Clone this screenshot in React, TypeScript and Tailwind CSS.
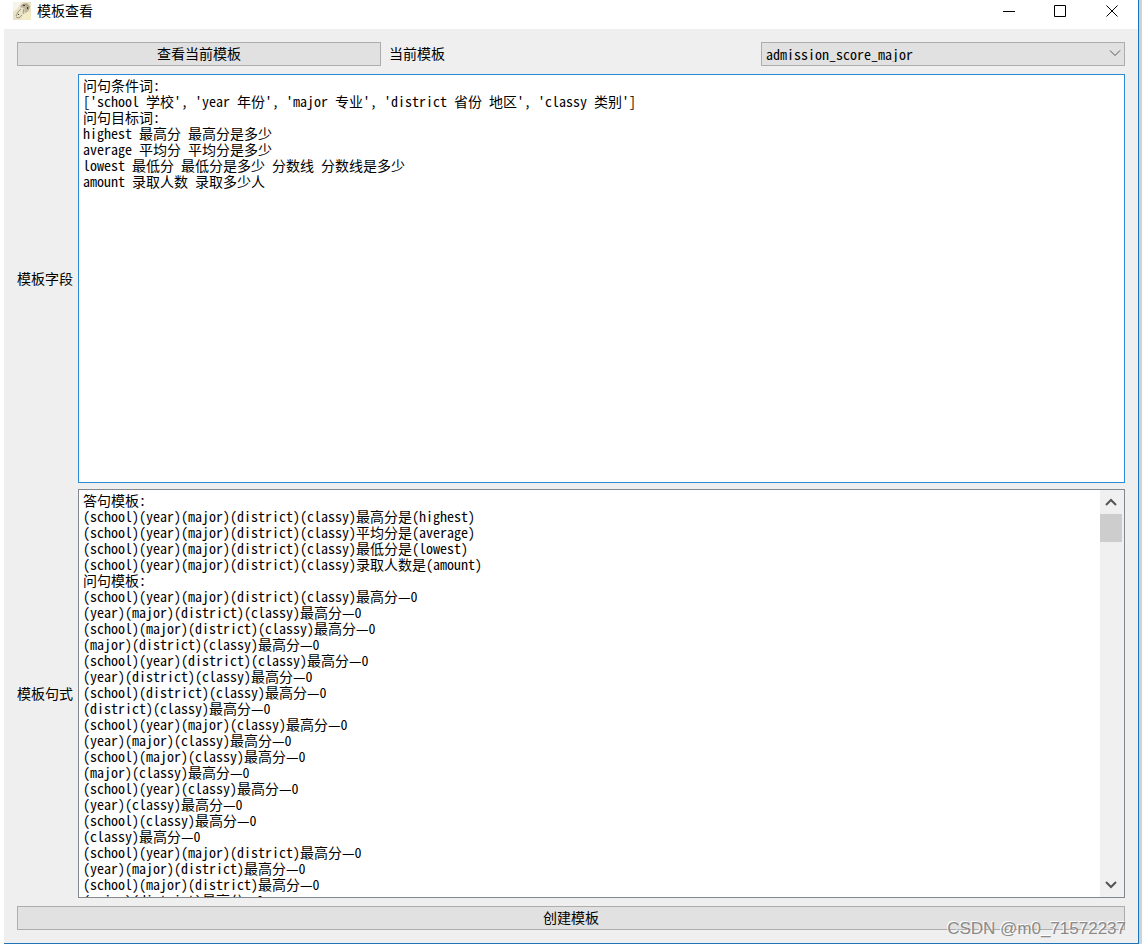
import { useRef, useState } from 'react'

const TEMPLATES = ['admission_score_major', 'admission_score_school', 'admission_plan']

const FIELDS_TEXT = `问句条件词:
['school 学校', 'year 年份', 'major 专业', 'district 省份 地区', 'classy 类别']
问句目标词:
highest 最高分 最高分是多少
average 平均分 平均分是多少
lowest 最低分 最低分是多少 分数线 分数线是多少
amount 录取人数 录取多少人`

const PATTERNS_TEXT = `答句模板:
(school)(year)(major)(district)(classy)最高分是(highest)
(school)(year)(major)(district)(classy)平均分是(average)
(school)(year)(major)(district)(classy)最低分是(lowest)
(school)(year)(major)(district)(classy)录取人数是(amount)
问句模板:
(school)(year)(major)(district)(classy)最高分—0
(year)(major)(district)(classy)最高分—0
(school)(major)(district)(classy)最高分—0
(major)(district)(classy)最高分—0
(school)(year)(district)(classy)最高分—0
(year)(district)(classy)最高分—0
(school)(district)(classy)最高分—0
(district)(classy)最高分—0
(school)(year)(major)(classy)最高分—0
(year)(major)(classy)最高分—0
(school)(major)(classy)最高分—0
(major)(classy)最高分—0
(school)(year)(classy)最高分—0
(year)(classy)最高分—0
(school)(classy)最高分—0
(classy)最高分—0
(school)(year)(major)(district)最高分—0
(year)(major)(district)最高分—0
(school)(major)(district)最高分—0
(major)(district)最高分—0`

function AppIcon() {
  return (
    <svg viewBox="0 0 18 18" className="h-[18px] w-[18px]" aria-hidden="true">
      <rect width="18" height="18" fill="#e9e2c9" />
      <path d="M0 0h9L4 7 0 10z" fill="#f7f4ea" />
      <path d="M12 9l6 2v7H8z" fill="#f3ebc3" />
      <path d="M7 5l3-3 4-1 3 3-1 4-3 3-2-1 1-3-2-1z" fill="#bdb49b" />
      <path d="M8 4l3-2 3 1M14 3l2 2-1 3M8 7l-3 3-2 4M11 7l-1 3 1 2M3 15l3 1 3-3" fill="none" stroke="#a09679" />
      <path d="M10 3h2v1h-2zM14 5h1v2h-1zM5 12h1v1H5z" fill="#3f3a33" />
    </svg>
  )
}

function TitleBar() {
  return (
    <header className="flex h-[29px] shrink-0 items-start bg-white pl-[9px]">
      <div className="flex h-[22px] flex-1 items-center gap-[6px]">
        <AppIcon />
        <h1 className="text-sm leading-4">模板查看</h1>
      </div>
      <div className="flex h-[22px] text-black">
        <button type="button" aria-label="最小化" className="flex w-[51px] items-center justify-center">
          <svg width="12" height="12" viewBox="0 0 12 12" fill="none" stroke="currentColor">
            <path d="M0 6.5h12" />
          </svg>
        </button>
        <button type="button" aria-label="最大化" className="flex w-[51px] items-center justify-center">
          <svg width="12" height="12" viewBox="0 0 12 12" fill="none" stroke="currentColor">
            <path d="M.5.5h11v11H.5z" />
          </svg>
        </button>
        <button type="button" aria-label="关闭" className="flex w-[53px] items-center justify-center">
          <svg width="12" height="12" viewBox="0 0 12 12" fill="none" stroke="currentColor">
            <path d="M.5.5l11 11M11.5.5l-11 11" />
          </svg>
        </button>
      </div>
    </header>
  )
}

export default function App() {
  const [template, setTemplate] = useState(TEMPLATES[0])
  const [fields, setFields] = useState(FIELDS_TEXT)
  const [patterns, setPatterns] = useState(PATTERNS_TEXT)
  const patternsRef = useRef<HTMLTextAreaElement>(null)

  const scrollPatterns = (delta: number) => {
    patternsRef.current?.scrollBy({ top: delta })
  }

  return (
    <div className="relative flex h-screen bg-white pb-[3px] pl-1 font-['Liberation_Sans','Noto_Sans_CJK_SC',sans-serif] text-sm text-black">
      <div className="flex min-w-0 flex-1 flex-col border-r border-b border-[#1f74b8]">
        <TitleBar />
        <main className="flex min-h-0 flex-1 flex-col gap-2 bg-[#efefef] p-[13px]">
          <div className="grid grid-cols-3 gap-2">
            <button type="button" className="h-6 border border-[#adadad] bg-[#e1e1e1] leading-4">
              查看当前模板
            </button>
            <label htmlFor="template" className="self-center leading-4">
              当前模板
            </label>
            <div className="relative">
              <select
                id="template"
                value={template}
                onChange={(e) => setTemplate(e.target.value)}
                className="block h-6 w-full appearance-none border border-[#adadad] bg-[#e1e1e1] px-1 font-['Noto_Sans_Mono_CJK_SC','Noto_Sans_CJK_SC',monospace] text-sm leading-4"
              >
                {TEMPLATES.map((name) => (
                  <option key={name}>{name}</option>
                ))}
              </select>
              <svg
                className="pointer-events-none absolute top-2 right-1 h-[7px] w-3"
                viewBox="0 0 12 7"
                fill="none"
                stroke="#555"
                aria-hidden="true"
              >
                <path d="M1 .5l5 5 5-5" />
              </svg>
            </div>
          </div>

          <div className="grid min-h-0 flex-1 grid-cols-[auto_1fr] grid-rows-2 gap-x-[5px] gap-y-[6px]">
            <label htmlFor="fields" className="self-center leading-4">
              模板字段
            </label>
            <textarea
              id="fields"
              value={fields}
              onChange={(e) => setFields(e.target.value)}
              spellCheck={false}
              className="resize-none border border-[#2b8ad8] bg-white px-1 pt-[2px] font-['Noto_Sans_Mono_CJK_SC','Noto_Sans_CJK_SC',monospace] text-sm leading-4 outline-none"
            />
            <label htmlFor="patterns" className="self-center leading-4">
              模板句式
            </label>
            <div className="flex min-h-0 border border-[#828790] bg-white">
              <textarea
                id="patterns"
                ref={patternsRef}
                value={patterns}
                onChange={(e) => setPatterns(e.target.value)}
                spellCheck={false}
                className="min-w-0 flex-1 resize-none overflow-hidden px-1 pt-[2px] font-['Noto_Sans_Mono_CJK_SC','Noto_Sans_CJK_SC',monospace] text-sm leading-4 outline-none"
              />
              <div className="flex w-6 flex-col bg-[#f0f0f0] pr-[2px]">
                <button
                  type="button"
                  aria-label="向上滚动"
                  onClick={() => scrollPatterns(-48)}
                  className="flex h-6 items-center justify-center"
                >
                  <svg width="12" height="8" viewBox="0 0 12 8" fill="none" stroke="#555" strokeWidth="2">
                    <path d="M1 7l5-5 5 5" />
                  </svg>
                </button>
                <div className="h-7 bg-[#cdcdcd]" />
                <div className="flex-1" />
                <button
                  type="button"
                  aria-label="向下滚动"
                  onClick={() => scrollPatterns(48)}
                  className="flex h-6 items-center justify-center"
                >
                  <svg width="12" height="8" viewBox="0 0 12 8" fill="none" stroke="#555" strokeWidth="2">
                    <path d="M1 1l5 5 5-5" />
                  </svg>
                </button>
              </div>
            </div>
          </div>

          <button type="button" className="h-6 border border-[#adadad] bg-[#e1e1e1] leading-4">
            创建模板
          </button>
        </main>
      </div>
      <div className="w-[3px] bg-[#c9d3dc]" />
      <p className="pointer-events-none absolute right-4 bottom-2 text-[17px] leading-5 text-[#8a8a8a] [text-shadow:-1px_-1px_0_#fff]">
        CSDN @m0_71572237
      </p>
    </div>
  )
}
